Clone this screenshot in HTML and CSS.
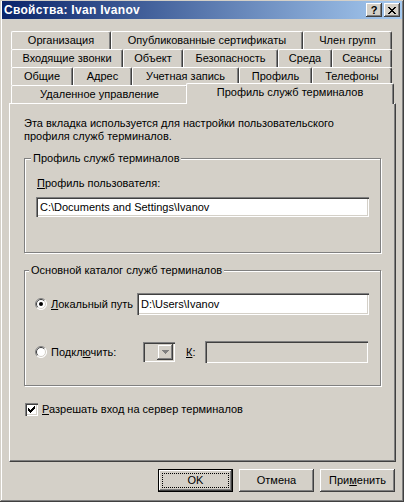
FILE: index.html
```html
<!DOCTYPE html>
<html lang="ru">
<head>
<meta charset="utf-8">
<title>Свойства: Ivan Ivanov</title>
<link rel="stylesheet" href="styles.css">
</head>
<body>
<div class="window">
  <div class="titlebar">
    <span class="title">Свойства: Ivan Ivanov</span>
    <div class="caption-btns">
      <span class="cbtn help">?</span>
      <span class="cbtn close">
        <svg width="8" height="7" viewBox="0 0 8 7" shape-rendering="crispEdges"><path fill="#000" d="M0 0h2v1H0zM6 0h2v1H6zM1 1h2v1H1zM5 1h2v1H5zM2 2h4v1H2zM3 3h2v1H3zM2 4h4v1H2zM1 5h2v1H1zM5 5h2v1H5zM0 6h2v1H0zM6 6h2v1H6z"/></svg>
      </span>
    </div>
  </div>

  <div class="tabs">
    <div class="tabrow r1">
      <div class="tab">Организация</div>
      <div class="tab">Опубликованные сертификаты</div>
      <div class="tab">Член групп</div>
    </div>
    <div class="tabrow r2">
      <div class="tab">Входящие звонки</div>
      <div class="tab">Объект</div>
      <div class="tab">Безопасность</div>
      <div class="tab">Среда</div>
      <div class="tab">Сеансы</div>
    </div>
    <div class="tabrow r3">
      <div class="tab">Общие</div>
      <div class="tab">Адрес</div>
      <div class="tab">Учетная запись</div>
      <div class="tab">Профиль</div>
      <div class="tab">Телефоны</div>
    </div>
    <div class="tabrow r4">
      <div class="tab">Удаленное управление</div>
      <div class="tab active">Профиль служб терминалов</div>
    </div>
  </div>

  <div class="panel">
    <p class="desc">Эта вкладка используется для настройки пользовательского<br>профиля служб терминалов.</p>

    <fieldset class="group g1">
      <legend>Профиль служб терминалов</legend>
      <div class="label"><u>П</u>рофиль пользователя:</div>
      <div class="field f-profile">C:\Documents and Settings\Ivanov</div>
    </fieldset>

    <fieldset class="group g2">
      <legend>Основной каталог служб терминалов</legend>
      <div class="opt-row row-local">
        <span class="radio">
          <svg width="12" height="12" viewBox="0 0 12 12">
            <circle cx="6" cy="6" r="5.5" fill="#fff"/>
            <path d="M2.1 9.9A5.5 5.5 0 0 1 9.9 2.1" fill="none" stroke="#808080"/>
            <path d="M9.9 2.1A5.5 5.5 0 0 1 2.1 9.9" fill="none" stroke="#fff"/>
            <path d="M2.8 9.2A4.5 4.5 0 0 1 9.2 2.8" fill="none" stroke="#404040"/>
            <path d="M9.2 2.8A4.5 4.5 0 0 1 2.8 9.2" fill="none" stroke="#d4d0c8"/>
            <circle cx="6" cy="6" r="2" fill="#000"/>
          </svg>
        </span>
        <span class="opt-label lbl-local"><u>Л</u>окальный путь</span>
        <div class="field f-local">D:\Users\Ivanov</div>
      </div>
      <div class="opt-row row-connect">
        <span class="radio">
          <svg width="12" height="12" viewBox="0 0 12 12">
            <circle cx="6" cy="6" r="5.5" fill="#fff"/>
            <path d="M2.1 9.9A5.5 5.5 0 0 1 9.9 2.1" fill="none" stroke="#808080"/>
            <path d="M9.9 2.1A5.5 5.5 0 0 1 2.1 9.9" fill="none" stroke="#fff"/>
            <path d="M2.8 9.2A4.5 4.5 0 0 1 9.2 2.8" fill="none" stroke="#404040"/>
            <path d="M9.2 2.8A4.5 4.5 0 0 1 2.8 9.2" fill="none" stroke="#d4d0c8"/>
          </svg>
        </span>
        <span class="opt-label lbl-connect">Подкл<u>ю</u>чить:</span>
        <div class="combo">
          <span class="combo-btn">
            <svg width="7" height="4" viewBox="0 0 7 4" shape-rendering="crispEdges"><path fill="#808080" d="M0 0h7v1H0zM1 1h5v1H1zM2 2h3v1H2zM3 3h1v1H3z"/></svg>
          </span>
        </div>
        <span class="drive-label"><u>К</u>:</span>
        <div class="field f-disabled"></div>
      </div>
    </fieldset>

    <div class="check-row">
      <span class="checkbox">
        <svg width="7" height="7" viewBox="0 0 7 7" shape-rendering="crispEdges"><path fill="#000" d="M6 0h1v3H6zM5 1h1v3H5zM4 2h1v3H4zM3 3h1v3H3zM2 4h1v3H2zM1 3h1v3H1zM0 2h1v3H0z"/></svg>
      </span>
      <span class="check-label"><u>Р</u>азрешать вход на сервер терминалов</span>
    </div>
  </div>

  <div class="buttons">
    <div class="btn default"><span class="focus">OK</span></div>
    <div class="btn">Отмена</div>
    <div class="btn">При<u>м</u>енить</div>
  </div>
</div>
</body>
</html>
```

FILE: styles.css
```css
* { box-sizing: border-box; }

body {
  margin: 0;
  background: #d4d0c8;
  font-family: "Liberation Sans", Arial, sans-serif;
  font-size: 11px;
  color: #000;
}

.window {
  width: 404px;
  height: 502px;
  background: #d4d0c8;
  padding: 1px 2px 2px 2px;
  box-shadow: inset -1px -1px #404040, inset 1px 1px #d4d0c8, inset -2px -2px #808080, inset 2px 2px #fff;
}

/* title bar */
.titlebar {
  height: 18px;
  display: flex;
  align-items: center;
  justify-content: space-between;
  padding: 0 2px 0 2px;
  background: linear-gradient(to right, #0a246a, #a6caf0);
  color: #fff;
  font-weight: bold;
}
.title { line-height: 14px; font-size: 12px; letter-spacing: 0.3px; }
.caption-btns { display: flex; gap: 2px; }
.cbtn {
  width: 16px;
  height: 14px;
  background: #d4d0c8;
  box-shadow: inset -1px -1px #404040, inset 1px 1px #fff, inset -2px -2px #808080;
  display: flex;
  align-items: center;
  justify-content: center;
  color: #000;
  font-size: 11px;
  line-height: 12px;
}
.cbtn.help { font-weight: bold; padding-bottom: 1px; }

/* tabs */
.tabs { margin-top: 12px; }
.tabrow {
  display: flex;
  margin-left: 9px;
  width: 381px;
  height: 18px;
}
.tab {
  flex: none;
  height: 18px;
  border-top: 1px solid #fff;
  border-left: 1px solid #fff;
  border-right: 1px solid #404040;
  border-radius: 2px 2px 0 0;
  box-shadow: inset -1px 0 #808080;
  text-align: center;
  line-height: 16px;
  white-space: nowrap;
  background: #d4d0c8;
}
.r1 .tab:nth-child(1) { width: 100px; }
.r1 .tab:nth-child(2) { width: 192px; }
.r1 .tab:nth-child(3) { width: 89px; }

.r2 .tab:nth-child(1) { width: 112px; }
.r2 .tab:nth-child(2) { width: 60px; }
.r2 .tab:nth-child(3) { width: 95px; }
.r2 .tab:nth-child(4) { width: 54px; }
.r2 .tab:nth-child(5) { width: 60px; }

.r3 .tab:nth-child(1) { width: 62px; }
.r3 .tab:nth-child(2) { width: 59px; }
.r3 .tab:nth-child(3) { width: 107px; }
.r3 .tab:nth-child(4) { width: 73px; }
.r3 .tab:nth-child(5) { width: 80px; }

.r4 .tab:nth-child(1) { width: 177px; }
.r4 .tab.active {
  width: 208px;
  height: 21px;
  margin: -2px 0 -1px -2px;
  position: relative;
  z-index: 1;
  line-height: 16px;
}

/* panel */
.panel {
  margin-left: 7px;
  width: 387px;
  height: 359px;
  border: 1px solid;
  border-color: #fff #404040 #404040 #fff;
  box-shadow: inset -1px -1px #808080;
  padding: 13px 14px 0 14px;
}
.desc { margin: 0; line-height: 13px; }

.group {
  width: 357px;
  min-width: 0;
  margin: 9px 0 0 0;
  border: 1px solid #808080;
  box-shadow: inset 1px 1px #fff, 1px 1px #fff;
}
.group legend {
  padding: 0 2px;
  margin-left: -6px;
  line-height: 13px;
  background: #d4d0c8;
}
.g1 { padding: 12px 11px 35px 12px; }
.g2 { margin-top: 11px; padding: 16px 11px 22px 10px; }

.label { line-height: 13px; }

.field {
  background: #fff;
  box-shadow: inset 1px 1px #808080, inset 2px 2px #404040, inset -1px -1px #fff, inset -2px -2px #d4d0c8;
  padding-left: 4px;
  display: flex;
  align-items: center;
  white-space: nowrap;
}
.f-profile { margin-top: 7px; margin-left: -1px; width: 333px; height: 20px; }

.opt-row { display: flex; align-items: center; height: 22px; }
.row-connect { margin-top: 26px; }
.radio { width: 12px; height: 12px; display: flex; }
.opt-label { margin-left: 4px; line-height: 13px; flex: none; }
.lbl-local { width: 86px; }
.lbl-connect { width: 92px; }
.f-local { width: 232px; height: 22px; }

.combo {
  width: 32px;
  height: 20px;
  display: flex;
  justify-content: flex-end;
  align-items: center;
  padding: 2px;
  background: #d4d0c8;
  box-shadow: inset 1px 1px #808080, inset 2px 2px #404040, inset -1px -1px #fff, inset -2px -2px #d4d0c8;
}
.combo-btn {
  width: 16px;
  height: 16px;
  background: #d4d0c8;
  box-shadow: inset -1px -1px #404040, inset 1px 1px #d4d0c8, inset -2px -2px #808080, inset 2px 2px #fff;
  display: flex;
  align-items: center;
  justify-content: center;
}
.drive-label { margin-left: 11px; width: 19px; line-height: 13px; }
.f-disabled { width: 163px; height: 22px; background: #d4d0c8; }

.check-row { display: flex; align-items: center; margin-top: 17px; margin-left: 1px; height: 13px; }
.checkbox {
  width: 13px;
  height: 13px;
  background: #fff;
  box-shadow: inset 1px 1px #808080, inset 2px 2px #404040, inset -1px -1px #fff, inset -2px -2px #d4d0c8;
  display: flex;
  align-items: center;
  justify-content: center;
}
.check-label { margin-left: 4px; line-height: 13px; }

/* buttons */
.buttons {
  display: flex;
  justify-content: flex-end;
  gap: 6px;
  margin: 7px 0 0 7px;
  width: 386px;
}
.btn {
  width: 75px;
  height: 23px;
  background: #d4d0c8;
  box-shadow: inset -1px -1px #404040, inset 1px 1px #fff, inset -2px -2px #808080;
  display: flex;
  align-items: center;
  justify-content: center;
  line-height: 13px;
}
.btn.default {
  box-shadow: inset 0 0 0 1px #000, inset -2px -2px #404040, inset 2px 2px #fff, inset -3px -3px #808080;
}
.focus {
  width: 67px;
  height: 15px;
  border: 1px dotted #000;
  display: flex;
  align-items: center;
  justify-content: center;
}
```
